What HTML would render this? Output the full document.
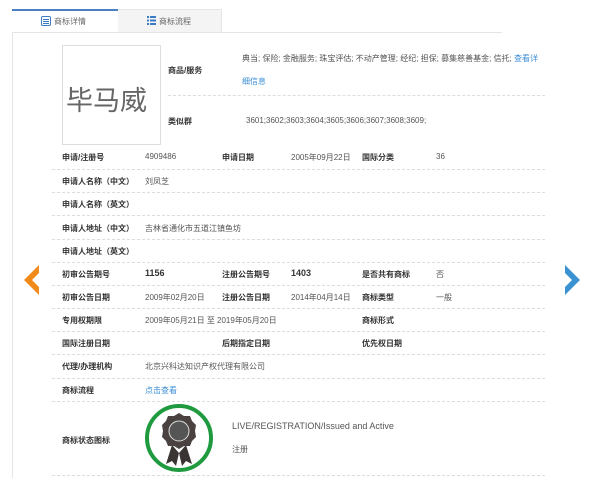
<!DOCTYPE html>
<html><head><meta charset="utf-8"><style>
body{margin:0;width:610px;height:493px;background:#fff;font-family:"Liberation Sans","Noto Sans CJK SC",sans-serif;font-size:8px;color:#555;position:relative;overflow:hidden}
.a{position:absolute;white-space:nowrap}
.b{font-weight:bold;color:#333}
.l{position:absolute;left:52px;width:493px;border-top:1px dashed #ddd;height:0}
</style></head><body>
<div class="a" style="left:12px;top:9px;width:106px;height:23px;border-top:2px solid #4a7fc1;background:#fff;box-sizing:border-box"></div>
<div class="a" style="left:118px;top:9px;width:104px;height:23px;background:#f4f4f4;border-top:1px solid #e6e6e6;border-right:1px solid #e6e6e6;box-sizing:border-box"></div>
<div class="a" style="left:12px;top:32px;width:490px;border-top:1px solid #e4e4e4"></div>
<div class="a" style="left:12px;top:32px;height:446px;border-left:1px solid #e4e4e4"></div>
<svg class="a" style="left:41px;top:16px" width="10" height="10"><rect x="0.5" y="0.5" width="9" height="9" rx="1.5" fill="none" stroke="#3a7cc8"/><path d="M2 3.5h6M2 5.5h6M2 7.5h6" stroke="#3a7cc8"/></svg>
<div class="a" style="left:54px;top:16px;color:#666">商标详情</div>
<svg class="a" style="left:147px;top:16px" width="9" height="9"><path d="M0 1h2M3 1h6M0 4.5h2M3 4.5h6M0 8h2M3 8h6" stroke="#3a7cc8" stroke-width="2"/></svg>
<div class="a" style="left:159px;top:16px;color:#666">商标流程</div>

<div class="a" style="left:62px;top:45px;width:99px;height:100px;border:1px solid #ddd;box-sizing:border-box"></div>
<div class="a" style="left:66px;top:79px;font-size:27px;color:#666;font-family:'Noto Sans CJK SC',sans-serif;letter-spacing:0px">毕马威</div>
<div class="a b" style="left:168px;top:65px">商品/服务</div>
<div class="a" style="left:242px;top:53px">典当; 保险; 金融服务; 珠宝评估; 不动产管理; 经纪; 担保; 募集慈善基金; 信托; <span style="color:#3a8dd8">查看详</span></div>
<div class="a" style="left:242px;top:76px;color:#3a8dd8">细信息</div>
<div class="l" style="left:168px;width:377px;top:95px"></div>
<div class="a b" style="left:168px;top:116px">类似群</div>
<div class="a" style="left:246px;top:116px">3601;3602;3603;3604;3605;3606;3607;3608;3609;</div>

<div class="a b" style="left:62px;top:152px">申请/注册号</div><div class="a" style="left:145px;top:152px">4909486</div>
<div class="a b" style="left:222px;top:152px">申请日期</div><div class="a" style="left:291px;top:152px">2005年09月22日</div>
<div class="a b" style="left:362px;top:152px">国际分类</div><div class="a" style="left:436px;top:152px">36</div>
<div class="l" style="top:169px"></div>
<div class="a b" style="left:62px;top:176px">申请人名称（中文）</div><div class="a" style="left:145px;top:176px">刘凤芝</div>
<div class="l" style="top:192px"></div>
<div class="a b" style="left:62px;top:199px">申请人名称（英文）</div>
<div class="l" style="top:215px"></div>
<div class="a b" style="left:62px;top:223px">申请人地址（中文）</div><div class="a" style="left:145px;top:223px">吉林省通化市五道江镇鱼坊</div>
<div class="l" style="top:239px"></div>
<div class="a b" style="left:62px;top:246px">申请人地址（英文）</div>
<div class="l" style="top:262px"></div>
<div class="a b" style="left:62px;top:269px">初审公告期号</div><div class="a b" style="left:145px;top:268px;font-size:9px">1156</div>
<div class="a b" style="left:222px;top:269px">注册公告期号</div><div class="a b" style="left:291px;top:268px;font-size:9px">1403</div>
<div class="a b" style="left:362px;top:269px">是否共有商标</div><div class="a" style="left:436px;top:269px">否</div>
<div class="l" style="top:285px"></div>
<div class="a b" style="left:62px;top:292px">初审公告日期</div><div class="a" style="left:145px;top:292px">2009年02月20日</div>
<div class="a b" style="left:222px;top:292px">注册公告日期</div><div class="a" style="left:291px;top:292px">2014年04月14日</div>
<div class="a b" style="left:362px;top:292px">商标类型</div><div class="a" style="left:436px;top:292px">一般</div>
<div class="l" style="top:308px"></div>
<div class="a b" style="left:62px;top:315px">专用权期限</div><div class="a" style="left:145px;top:315px">2009年05月21日 至 2019年05月20日</div>
<div class="a b" style="left:362px;top:315px">商标形式</div>
<div class="l" style="top:331px"></div>
<div class="a b" style="left:62px;top:338px">国际注册日期</div>
<div class="a b" style="left:222px;top:338px">后期指定日期</div>
<div class="a b" style="left:362px;top:338px">优先权日期</div>
<div class="l" style="top:354px"></div>
<div class="a b" style="left:62px;top:361px">代理/办理机构</div><div class="a" style="left:145px;top:361px">北京兴科达知识产权代理有限公司</div>
<div class="l" style="top:378px"></div>
<div class="a b" style="left:62px;top:385px">商标流程</div><div class="a" style="left:145px;top:385px;color:#3a8dd8">点击查看</div>
<div class="l" style="top:401px"></div>
<div class="a b" style="left:62px;top:435px">商标状态图标</div>
<svg class="a" style="left:144px;top:403px" width="70" height="70"><ellipse cx="35" cy="35" rx="32" ry="32" fill="none" stroke="#1f9a3f" stroke-width="4"/>
<path d="M28 42l-6 19 6-3 4 5 3-13zM42 42l6 19-6-3-4 5-3-13z" fill="#3a3432"/>
<path d="M35 10l5 3 6 0 2 5 4 4-1 6 1 6-4 4-2 5-6 0-5 3-5-3-6 0-2-5-4-4 1-6-1-6 4-4 2-5 6 0z" fill="#4a4240"/>
<circle cx="35" cy="28" r="10" fill="#555" stroke="#ddd" stroke-width="1"/></svg>
<div class="a" style="left:232px;top:421px;font-size:9px">LIVE/REGISTRATION/Issued and Active</div>
<div class="a" style="left:232px;top:444px">注册</div>
<div class="l" style="top:475px"></div>

<svg class="a" style="left:22px;top:265px" width="18" height="30"><path d="M17 0L2 15 17 30 17 22 10 15 17 8z" fill="#f08a1a"/></svg>
<svg class="a" style="left:564px;top:265px" width="18" height="30"><path d="M1 0L16 15 1 30 1 22 8 15 1 8z" fill="#3a93d0"/></svg>
</body></html>
